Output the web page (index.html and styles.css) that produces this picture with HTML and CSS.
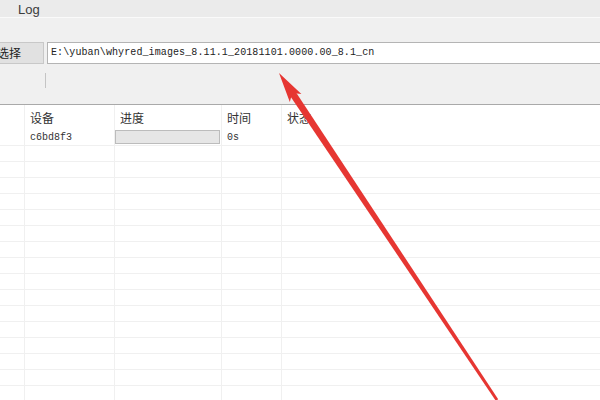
FILE: index.html
```html
<!DOCTYPE html>
<html lang="zh">
<head>
    <meta charset="UTF-8">
    <title>Log</title>
    <link rel="stylesheet" href="styles.css">
</head>
<body>
    <div class="titlebar"><span class="tab">Log</span></div>
    <div class="panel">
        <div class="path-row">
            <div class="btn">选择</div>
            <div class="path-input">E:\yuban\whyred_images_8.11.1_20181101.0000.00_8.1_cn</div>
        </div>
        <div class="tool-row"><span class="sep"></span></div>
    </div>
    <table class="grid">
        <tr class="head">
            <td class="c0"></td>
            <td class="c1">设备</td>
            <td class="c2">进度</td>
            <td class="c3">时间</td>
            <td class="c4">状态</td>
        </tr>
        <tr class="data">
            <td></td>
            <td class="mono">c6bd8f3</td>
            <td><div class="progress"></div></td>
            <td class="mono">0s</td>
            <td></td>
        </tr>
        <tr><td></td><td></td><td></td><td></td><td></td></tr>
        <tr><td></td><td></td><td></td><td></td><td></td></tr>
        <tr><td></td><td></td><td></td><td></td><td></td></tr>
        <tr><td></td><td></td><td></td><td></td><td></td></tr>
        <tr><td></td><td></td><td></td><td></td><td></td></tr>
        <tr><td></td><td></td><td></td><td></td><td></td></tr>
        <tr><td></td><td></td><td></td><td></td><td></td></tr>
        <tr><td></td><td></td><td></td><td></td><td></td></tr>
        <tr><td></td><td></td><td></td><td></td><td></td></tr>
        <tr><td></td><td></td><td></td><td></td><td></td></tr>
        <tr><td></td><td></td><td></td><td></td><td></td></tr>
        <tr><td></td><td></td><td></td><td></td><td></td></tr>
        <tr><td></td><td></td><td></td><td></td><td></td></tr>
        <tr><td></td><td></td><td></td><td></td><td></td></tr>
        <tr><td></td><td></td><td></td><td></td><td></td></tr>
        <tr><td></td><td></td><td></td><td></td><td></td></tr>
    </table>

    <!-- annotation arrow drawn over the screenshot -->
    <svg class="arrow" width="600" height="400" viewBox="0 0 600 400">
        <polygon points="294.1,89.4 498.2,399.2 495.8,400.8 288.3,93.2" fill="#e63632"/>
        <polygon points="279,73 301.4,94.1 292.3,93 289.8,101.9" fill="#e63632"/>
    </svg>
</body>
</html>
```

FILE: styles.css
```css
body {
    margin: 0;
    width: 600px;
    height: 400px;
    overflow: hidden;
    background: #fff;
    font-family: "Noto Sans CJK SC", "Liberation Sans", sans-serif;
    font-size: 12px;
    color: #333;
    position: relative;
}
.titlebar {
    height: 17px;
    background: #ebebeb;
    border-bottom: 1px solid #fafafa;
}
.tab {
    display: inline-block;
    margin-left: 18px;
    font-family: "Liberation Sans", sans-serif;
    font-size: 13px;
    line-height: 15px;
    color: #3c3c3c;
}
.panel {
    height: 87px;
    background: #f0f0f0;
    border-bottom: 1px solid #a9a9a9;
    padding-top: 24px;
    box-sizing: border-box;
}
.path-row {
    display: flex;
    gap: 3px;
    height: 22px;
}
.btn {
    margin-left: -26px;
    width: 68px;
    height: 20px;
    background: #e1e1e1;
    border: 1px solid #c8c8c8;
    text-align: center;
    line-height: 20px;
    color: #222;
}
.path-input {
    flex: 1;
    margin-right: -10px;
    height: 20px;
    background: #fff;
    border: 1px solid #b4b4b4;
    padding-left: 3px;
    font-family: "Liberation Mono", monospace;
    font-size: 10px;
    letter-spacing: 0.1px;
    line-height: 20px;
    color: #222;
}
.tool-row {
    padding-top: 9px;
    padding-left: 45px;
}
.sep {
    display: block;
    width: 1px;
    height: 15px;
    background: #c4c4c4;
}
.grid {
    border-collapse: collapse;
    table-layout: fixed;
    width: 620px;
}
.grid td {
    height: 15px;
    padding: 0 0 0 5px;
    border-right: 1px solid #f0f0f0;
    border-bottom: 1px solid #f0f0f0;
    white-space: nowrap;
    overflow: hidden;
}
.c0 { width: 19px; }
.c1 { width: 84px; }
.c2 { width: 101px; }
.c3 { width: 54px; }
.grid .head td {
    height: 24px;
    border-bottom: none;
    vertical-align: middle;
    color: #333;
}
.grid .data td {
    height: 16px;
}
.mono {
    font-family: "Liberation Mono", monospace;
    font-size: 10px;
}
.grid .data td:nth-child(3) {
    padding: 0;
}
.progress {
    height: 14px;
    margin: 0 1px 0 0;
    background: #e6e6e6;
    border: 1px solid #bcbcbc;
    box-sizing: border-box;
}
.arrow {
    position: absolute;
    left: 0;
    top: 0;
}
```
